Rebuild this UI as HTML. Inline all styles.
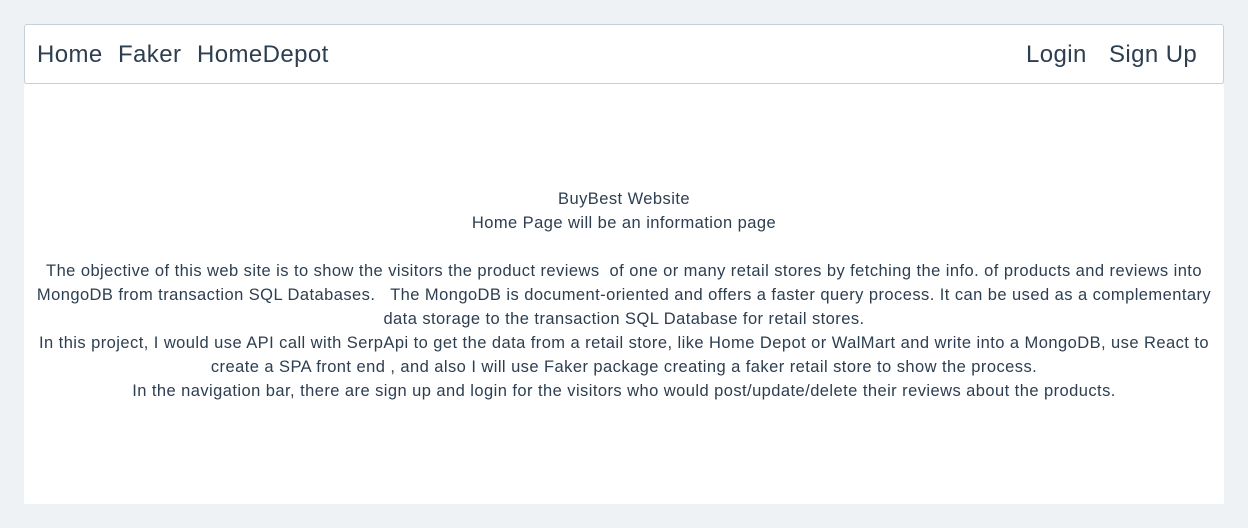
<!DOCTYPE html>
<html><head><style>
body{margin:0;background:#eff2f5;font-family:"Liberation Sans",sans-serif;color:#2c3e50;width:1248px;height:528px;overflow:hidden}
.nav{position:absolute;left:24px;top:24px;width:1198px;height:58px;border:1px solid #c5d0da;border-radius:3px;background:#fff;box-sizing:content-box}
.nav span{position:absolute;top:15px;font-size:24px;line-height:30px;white-space:nowrap;letter-spacing:0.4px}
.main{position:absolute;left:24px;top:84px;width:1200px;height:420px;background:#fff}
.t{position:absolute;left:0;width:1200px;text-align:center;font-size:16.5px;letter-spacing:0.44px;line-height:24px;white-space:nowrap}
</style></head><body>
<div class="nav">
<span style="left:12px">Home</span>
<span style="left:93px">Faker</span>
<span style="left:172px">HomeDepot</span>
<span style="left:1001px">Login</span>
<span style="left:1084px">Sign Up</span>
</div>
<div class="main">
<div class="t" style="top:103px">BuyBest Website<br>Home Page will be an information page</div>
<div class="t" style="top:175px">The objective of this web site is to show the visitors the product reviews&nbsp; of one or many retail stores by fetching the info. of products and reviews into<br>MongoDB from transaction SQL Databases.&nbsp;&nbsp; The MongoDB is document-oriented and offers a faster query process. It can be used as a complementary<br>data storage to the transaction SQL Database for retail stores.<br>In this project, I would use API call with SerpApi to get the data from a retail store, like Home Depot or WalMart and write into a MongoDB, use React to<br>create a SPA front end , and also I will use Faker package creating a faker retail store to show the process.<br>In the navigation bar, there are sign up and login for the visitors who would post/update/delete their reviews about the products.</div>
</div>
</body></html>
